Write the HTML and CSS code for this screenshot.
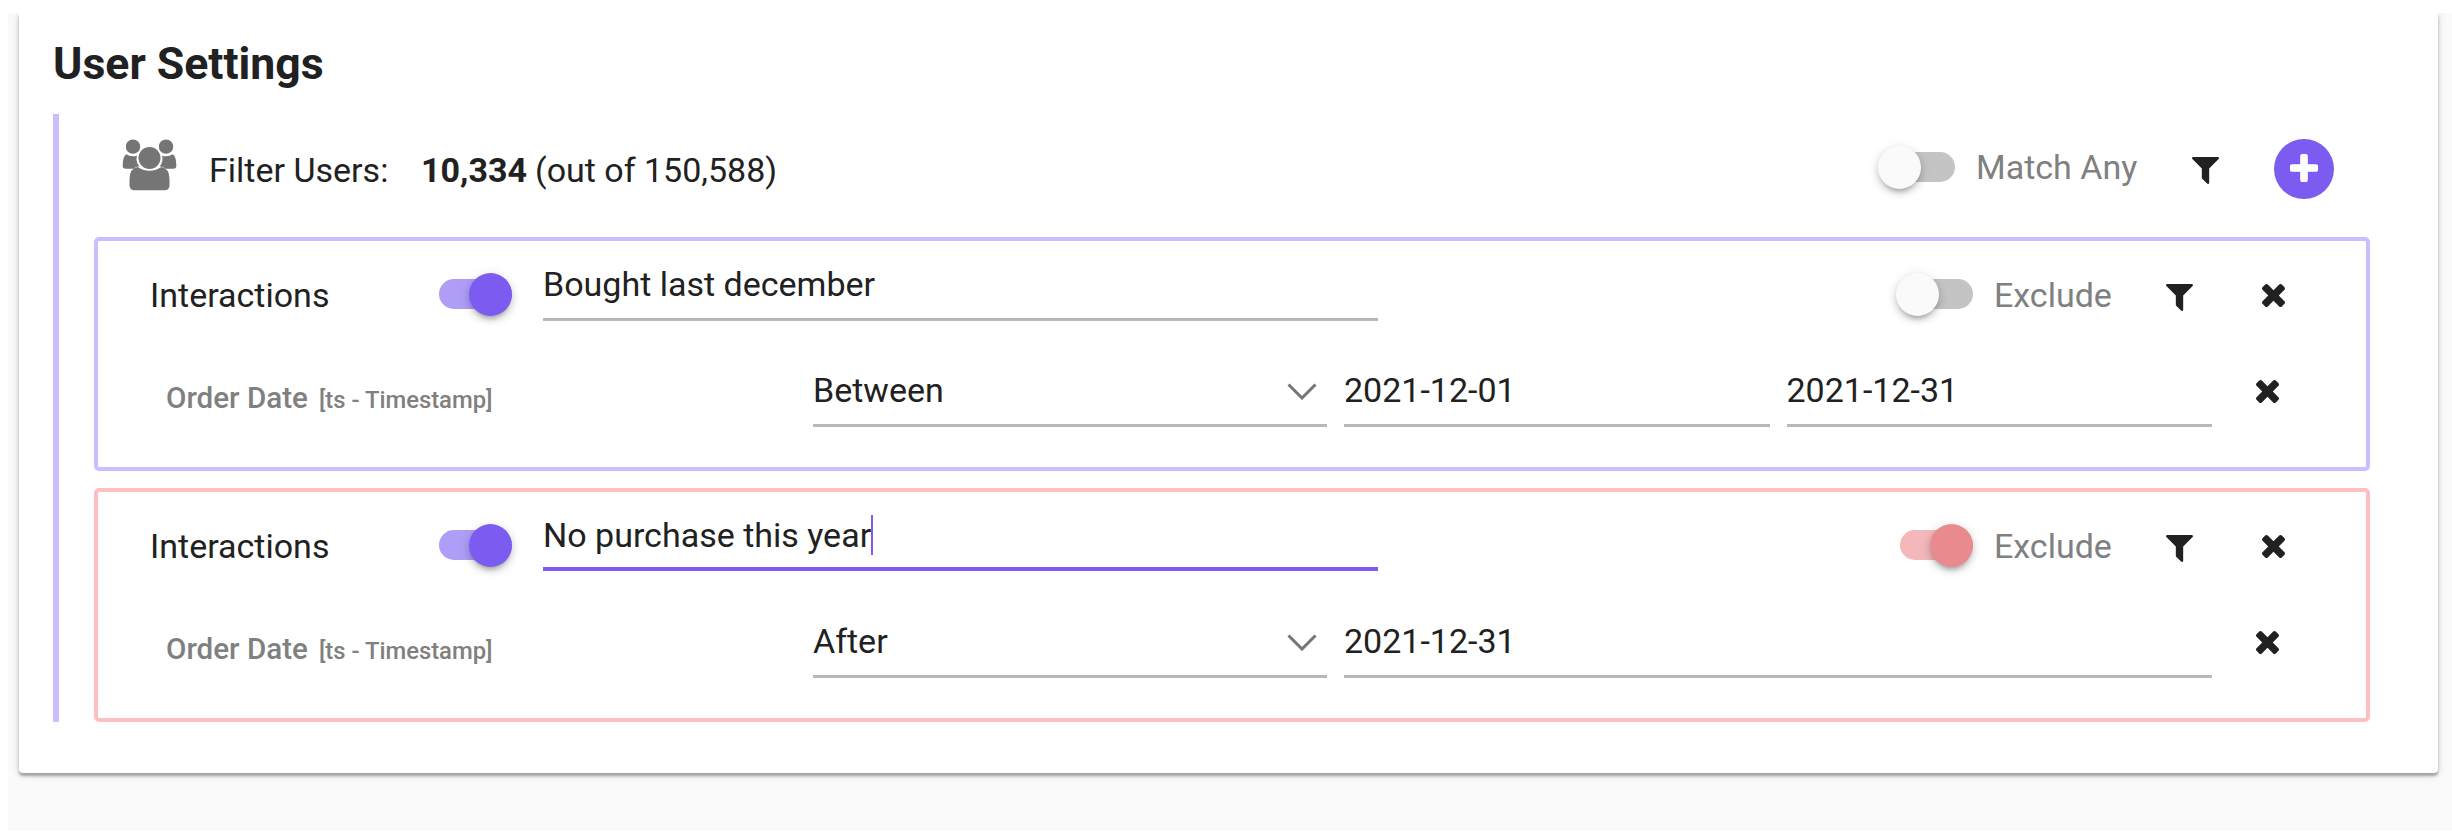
FILE: index.html
```html
<!DOCTYPE html>
<html lang="en">
<head>
<meta charset="utf-8">
<title>User Settings</title>
<link rel="stylesheet" href="styles.css">
</head>
<body>
<svg class="defs" width="0" height="0">
  <symbol id="times" viewBox="302 366 1188 1188"><path d="M1490 1322q0 40-28 68l-136 136q-28 28-68 28t-68-28l-294-294-294 294q-28 28-68 28t-68-28l-136-136q-28-28-28-68t28-68l294-294-294-294q-28-28-28-68t28-68l136-136q28-28 68-28t68 28l294 294 294-294q28-28 68-28t68 28l136 136q28 28 28 68t-28 68l-294 294 294 294q28 28 28 68z"/></symbol>
  <symbol id="filter" viewBox="191 256 1410 1408"><path d="M1595 295q17 41-14 70l-493 493v742q0 42-39 59-13 5-25 5-27 0-45-19l-256-256q-19-19-19-45v-486l-493-493q-31-29-14-70 17-39 59-39h1280q42 0 59 39z"/></symbol>
  <symbol id="plus" viewBox="192 128 1408 1408"><path d="M1600 736v192q0 40-28 68t-68 28h-416v416q0 40-28 68t-68 28h-192q-40 0-68-28t-28-68v-416h-416q-40 0-68-28t-28-68v-192q0-40 28-68t68-28h416v-416q0-40 28-68t68-28h192q40 0 68 28t28 68v416h416q40 0 68 28t28 68z"/></symbol>
  <symbol id="users" viewBox="0 0 168 156">
    <circle cx="33" cy="23" r="21.500"/><circle cx="132" cy="23" r="21.500"/><circle cx="82.500" cy="57" r="33"/>
    <path d="M13 46Q22 52 33 52Q40 52 45 50Q40 68 52 82Q42 83 34 89H11Q2 89 2 80Q2 52 13 46Z"/>
    <path d="M152 46Q143 52 132 52Q125 52 120 50Q125 68 113 82Q123 83 131 89H154Q163 89 163 80Q163 52 152 46Z"/>
    <path d="M22.500 139V120Q23 88 47 84Q62 95 82.500 95Q103 95 118 84Q142 88 142.500 120V139Q142.500 154 127 154H38Q22.500 154 22.500 139Z"/>
  </symbol>
</svg>
<div class="page">
  <main class="card">
    <h1 class="title">User Settings</h1>
    <section class="settings">
      <header class="summary">
        <svg class="users-icon"><use href="#users"/></svg>
        <span class="summary-label">Filter Users:</span>
        <b class="count">10,334</b>
        <span class="total">(out of 150,588)</span>
        <div class="toggle match-toggle"></div>
        <span class="toggle-label match-label">Match Any</span>
        <svg class="filter-icon"><use href="#filter"/></svg>
        <button class="add"><svg class="plus-icon"><use href="#plus"/></svg></button>
      </header>

      <article class="rule">
        <div class="rule-head">
          <span class="rule-label">Interactions</span>
          <div class="toggle on"></div>
          <div class="field name-field">Bought last december</div>
          <div class="toggle exclude-toggle"></div>
          <span class="toggle-label exclude-label">Exclude</span>
          <svg class="filter-icon"><use href="#filter"/></svg>
          <svg class="times-icon"><use href="#times"/></svg>
        </div>
        <div class="condition">
          <div class="property"><span class="property-name">Order Date</span><span class="property-type">[ts - Timestamp]</span></div>
          <div class="field select">Between<svg class="chevron" viewBox="0 0 30 17"><path d="M1.500 1.500 15 15 28.500 1.500"/></svg></div>
          <div class="field value">2021-12-01</div>
          <div class="field value">2021-12-31</div>
          <svg class="times-icon"><use href="#times"/></svg>
        </div>
      </article>

      <article class="rule excluded">
        <div class="rule-head">
          <span class="rule-label">Interactions</span>
          <div class="toggle on"></div>
          <div class="field name-field focused">No purchase this year<i class="caret"></i></div>
          <div class="toggle on warn exclude-toggle"></div>
          <span class="toggle-label exclude-label">Exclude</span>
          <svg class="filter-icon"><use href="#filter"/></svg>
          <svg class="times-icon"><use href="#times"/></svg>
        </div>
        <div class="condition">
          <div class="property"><span class="property-name">Order Date</span><span class="property-type">[ts - Timestamp]</span></div>
          <div class="field select">After<svg class="chevron" viewBox="0 0 30 17"><path d="M1.500 1.500 15 15 28.500 1.500"/></svg></div>
          <div class="field value">2021-12-31</div>
          <svg class="times-icon"><use href="#times"/></svg>
        </div>
      </article>
    </section>
  </main>
</div>
</body>
</html>
```
FILE: styles.css
```css
* { box-sizing: border-box; }

body {
  margin: 0;
  padding: 13px 0 3px 8px;
  height: 834px;
  background: #fff;
  color: #212121;
  font: 400 34px/40px Roboto, sans-serif;
  overflow: hidden;
}

.defs { display: block; }

svg { flex: none; fill: #212121; }

.page {
  height: 818px;
  padding: 0 14px 0 11px;
  background: #fafafa;
  overflow: hidden;
}

.card {
  height: 760px;
  padding: 24px 68px 0 34px;
  background: #fff;
  border-radius: 0 0 4px 4px;
  box-shadow: 0 3px 2px rgba(0, 0, 0, .2), 0 3px 4px rgba(0, 0, 0, .14), 0 1px 10px rgba(0, 0, 0, .12);
}

.title {
  margin: 0;
  height: 77px;
  font-size: 44.6px;
  line-height: 54px;
  font-weight: 700;
}

.settings {
  height: 608px;
  padding-left: 35px;
  border-left: 6px solid #cbbdff;
}

.summary {
  display: flex;
  align-items: flex-start;
  height: 123px;
  padding: 25px 36px 0 28px;
}

.users-icon { width: 56px; height: 52px; fill: #757575; }
.summary-label { width: 212px; margin: 11px 0 0 31px; }
.count { width: 114px; margin-top: 11px; }
.total { margin-top: 11px; }
.match-toggle { margin: 7px -1px 0 auto; }
.summary .filter-icon { margin: 18px 55px 0 0; }

.toggle { position: relative; width: 73px; height: 43px; flex: none; }

.toggle::before {
  content: "";
  position: absolute;
  inset: 6px 0 7px;
  border-radius: 15px;
  background: #c4c4c4;
}

.toggle::after {
  content: "";
  position: absolute;
  left: -4px;
  top: 0;
  width: 43px;
  height: 43px;
  border-radius: 50%;
  background: #fafafa;
  box-shadow: 0 6px 4px -4px rgba(0, 0, 0, .2), 0 4px 7px rgba(0, 0, 0, .14), 0 2px 12px rgba(0, 0, 0, .12);
}

.toggle.on::before { background: #b09df7; }
.toggle.on::after { left: 30px; background: #7c5cf0; }
.toggle.warn::before { background: #f4b8bb; }
.toggle.warn::after { background: #e98a8f; }

.toggle-label { margin-left: 22px; color: #808080; flex: none; }
.match-label { width: 216px; margin-top: 8px; }
.exclude-label { width: 172px; margin: 2px 0 0 21px; }

.filter-icon { width: 27px; height: 27px; }
.times-icon { width: 23px; height: 23px; }

.add {
  display: flex;
  align-items: flex-start;
  justify-content: center;
  width: 60px;
  height: 60px;
  padding: 15px 0 0;
  border: 0;
  border-radius: 50%;
  background: #7c5cf0;
}

.plus-icon { width: 28px; height: 28px; fill: #fff; }

.rule {
  height: 234px;
  margin-bottom: 17px;
  padding: 32px 0 0 52px;
  border: 4px solid #cbbdff;
  border-radius: 5px;
}

.rule.excluded { border-color: #ffbfbf; }

.rule-head { display: flex; align-items: flex-start; height: 80px; }
.rule-label { width: 289px; margin-top: 2px; flex: none; }

.field {
  position: relative;
  border-bottom: 3px solid #b8b8b8;
  flex: none;
}

.name-field { width: 835px; height: 57px; margin: -9px 0 0 31px; }
.name-field.focused { height: 56px; border-bottom: 4px solid #7c5cf0; }

.caret {
  display: inline-block;
  width: 2px;
  height: 40px;
  vertical-align: top;
  background: #7c5cf0;
}

.exclude-toggle { margin-left: 522px; }
.rule-head .filter-icon { margin: 11px 69px 0 0; }
.rule-head .times-icon { margin-top: 11px; }

.condition { display: flex; align-items: flex-start; padding: 17px 87px 0 16px; }
.property { width: 647px; margin-top: 6px; color: #808080; font-weight: 500; white-space: nowrap; }
.property-name { font-size: 29.6px; }
.property-type { margin-left: 11px; font-size: 23.8px; }
.condition .field { height: 57px; }
.select { width: 514px; }
.value { margin-left: 17px; }
.condition .field.value { flex: 1; }
.condition .times-icon { margin: 10px 0 0 44px; }

.chevron {
  position: absolute;
  right: 10px;
  top: 13px;
  width: 30px;
  height: 17px;
  fill: none;
  stroke: #757575;
  stroke-width: 3;
}
```
